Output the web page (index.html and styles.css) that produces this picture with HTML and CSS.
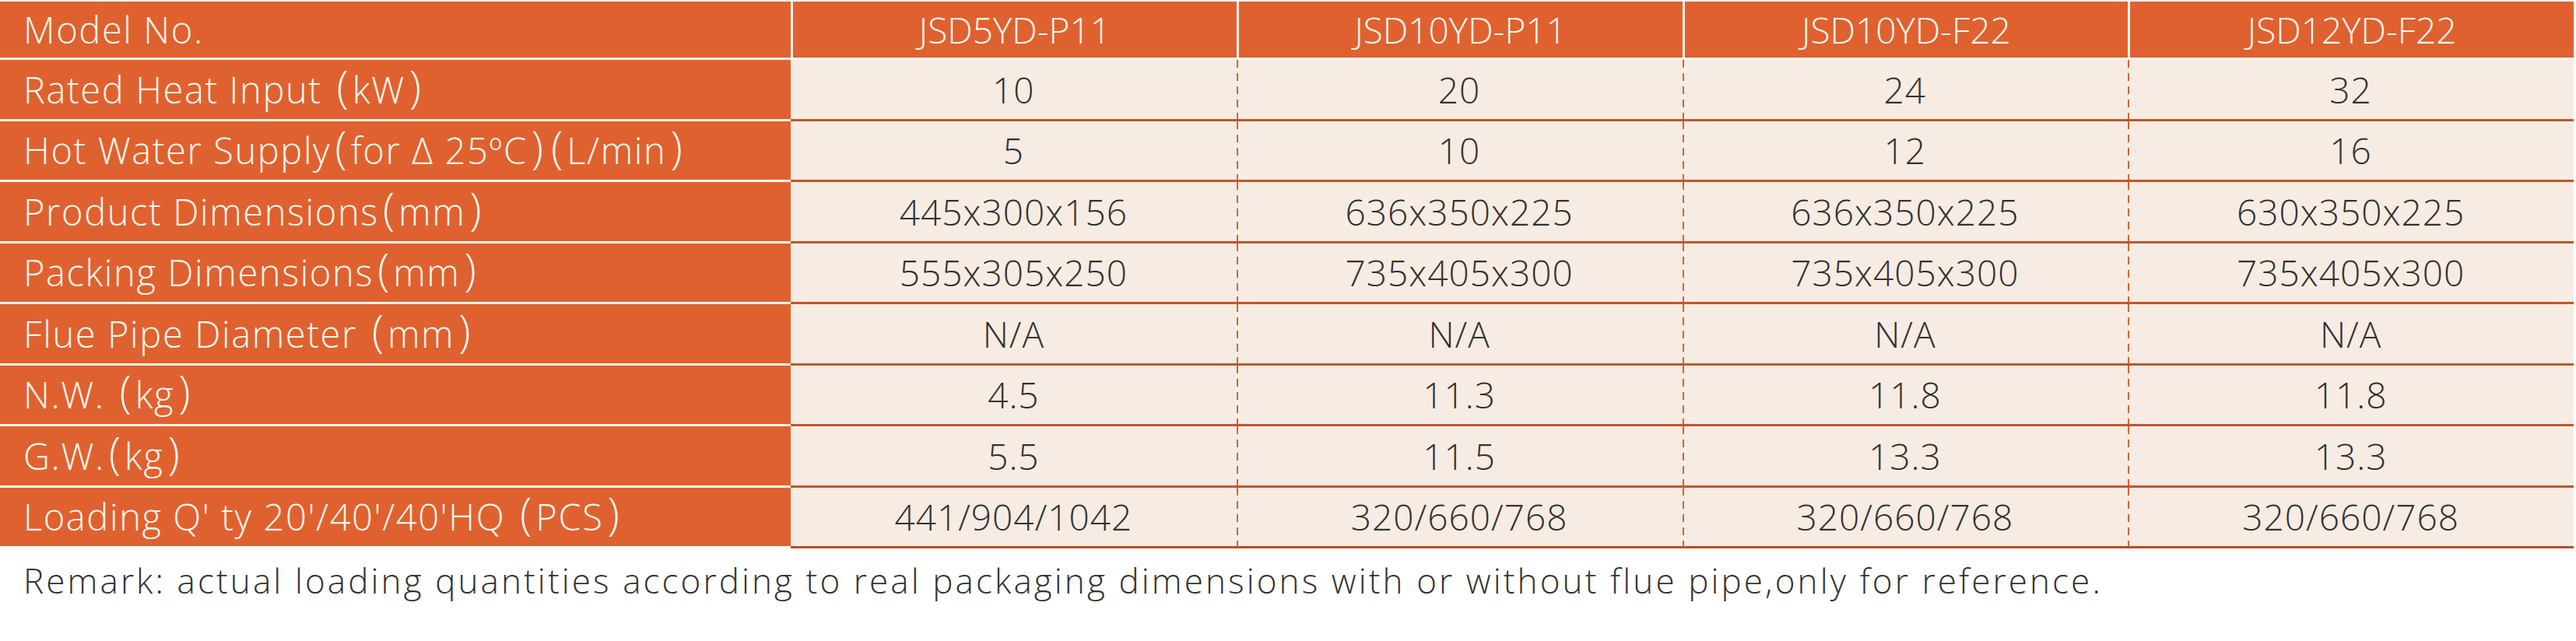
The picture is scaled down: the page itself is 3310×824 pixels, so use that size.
FILE: index.html
```html
<!DOCTYPE html>
<html lang="en">
<head>
<meta charset="utf-8">
<title>Specifications</title>
<link rel="stylesheet" href="styles.css">
</head>
<body>
<div class="spec">
  <div class="row head">
    <div class="cell label"><span class="t">Model No.</span></div>
    <div class="cell val">JSD5YD-P11</div>
    <div class="cell val">JSD10YD-P11</div>
    <div class="cell val">JSD10YD-F22</div>
    <div class="cell val">JSD12YD-F22</div>
  </div>
  <div class="row body first">
    <div class="cell label"><span class="t">Rated Heat Input <span class="p">(</span>kW<span class="p">)</span></span></div>
    <div class="cell val">10</div>
    <div class="cell val">20</div>
    <div class="cell val">24</div>
    <div class="cell val">32</div>
  </div>
  <div class="row body">
    <div class="cell label"><span class="t">Hot Water Supply<span class="p">(</span>for Δ 25ºC<span class="p">)</span><span class="p">(</span>L/min<span class="p">)</span></span></div>
    <div class="cell val">5</div>
    <div class="cell val">10</div>
    <div class="cell val">12</div>
    <div class="cell val">16</div>
  </div>
  <div class="row body">
    <div class="cell label"><span class="t">Product Dimensions<span class="p">(</span>mm<span class="p">)</span></span></div>
    <div class="cell val">445x300x156</div>
    <div class="cell val">636x350x225</div>
    <div class="cell val">636x350x225</div>
    <div class="cell val">630x350x225</div>
  </div>
  <div class="row body">
    <div class="cell label"><span class="t">Packing Dimensions<span class="p">(</span>mm<span class="p">)</span></span></div>
    <div class="cell val">555x305x250</div>
    <div class="cell val">735x405x300</div>
    <div class="cell val">735x405x300</div>
    <div class="cell val">735x405x300</div>
  </div>
  <div class="row body">
    <div class="cell label"><span class="t">Flue Pipe Diameter <span class="p">(</span>mm<span class="p">)</span></span></div>
    <div class="cell val">N/A</div>
    <div class="cell val">N/A</div>
    <div class="cell val">N/A</div>
    <div class="cell val">N/A</div>
  </div>
  <div class="row body">
    <div class="cell label"><span class="t">N.W. <span class="p">(</span>kg<span class="p">)</span></span></div>
    <div class="cell val">4.5</div>
    <div class="cell val">11.3</div>
    <div class="cell val">11.8</div>
    <div class="cell val">11.8</div>
  </div>
  <div class="row body">
    <div class="cell label"><span class="t">G.W.<span class="p">(</span>kg<span class="p">)</span></span></div>
    <div class="cell val">5.5</div>
    <div class="cell val">11.5</div>
    <div class="cell val">13.3</div>
    <div class="cell val">13.3</div>
  </div>
  <div class="row body last">
    <div class="cell label"><span class="t">Loading Q' ty 20'/40'/40'HQ <span class="p">(</span>PCS<span class="p">)</span></span></div>
    <div class="cell val">441/904/1042</div>
    <div class="cell val">320/660/768</div>
    <div class="cell val">320/660/768</div>
    <div class="cell val">320/660/768</div>
  </div>
</div>
<p class="remark">Remark: actual loading quantities according to real packaging dimensions with or without flue pipe,only for reference.</p>
</body>
</html>
```
FILE: styles.css
```css
html, body {
  margin: 0;
  padding: 0;
  background: #ffffff;
}
body {
  font-family: "Open Sans", "Noto Sans CJK SC", sans-serif;
  font-weight: 300;
}
.spec {
  width: 3307px;
  padding-top: 2px;
  display: flex;
  flex-direction: column;
}
.row {
  display: grid;
  grid-template-columns: 1016px repeat(4, 1fr);
}
.cell {
  display: flex;
  align-items: center;
  font-size: 46px;
  white-space: nowrap;
}
.label {
  background: #df6130;
  color: #fff8ec;
  padding-left: 30px;
  font-size: 47px;
  letter-spacing: 1.6px;
}
.t {
  white-space: pre;
}
.p {
  display: inline-block;
  font-size: 1.2em;
  line-height: 1;
  margin: 0 5px;
  letter-spacing: 0;
  position: relative;
  top: -1px;
}
.val {
  justify-content: center;
  color: #323232;
  letter-spacing: 1px;
}
.head {
  height: 72px;
  border-bottom: 3px solid #fbf4ec;
}
.head .cell {
  background: #df6130;
  color: #fff8ec;
}
.head .val {
  border-left: 3px solid #fbf4ec;
  letter-spacing: 0;
}
.body .cell {
  box-sizing: content-box;
  height: 75.5px;
}
.body .val {
  background: #f6ece3;
}
.body .val + .val {
  background-image: repeating-linear-gradient(to bottom, #d9642f 0 10px, transparent 10px 17px);
  background-size: 2px 100%;
  background-repeat: no-repeat;
  background-position: left top;
}
.body:not(.first) .label {
  border-top: 3px solid #fbf4ec;
}
.body:not(.first) .val {
  border-top: 3px solid #c3552c;
}
.last .val {
  border-bottom: 3px solid #b54e2a;
}
.last .label {
  border-bottom: 3px solid #ffffff;
}
.remark {
  margin: 11px 0 0 30px;
  font-size: 44px;
  letter-spacing: 3.1px;
  color: #333333;
  white-space: nowrap;
}
```
